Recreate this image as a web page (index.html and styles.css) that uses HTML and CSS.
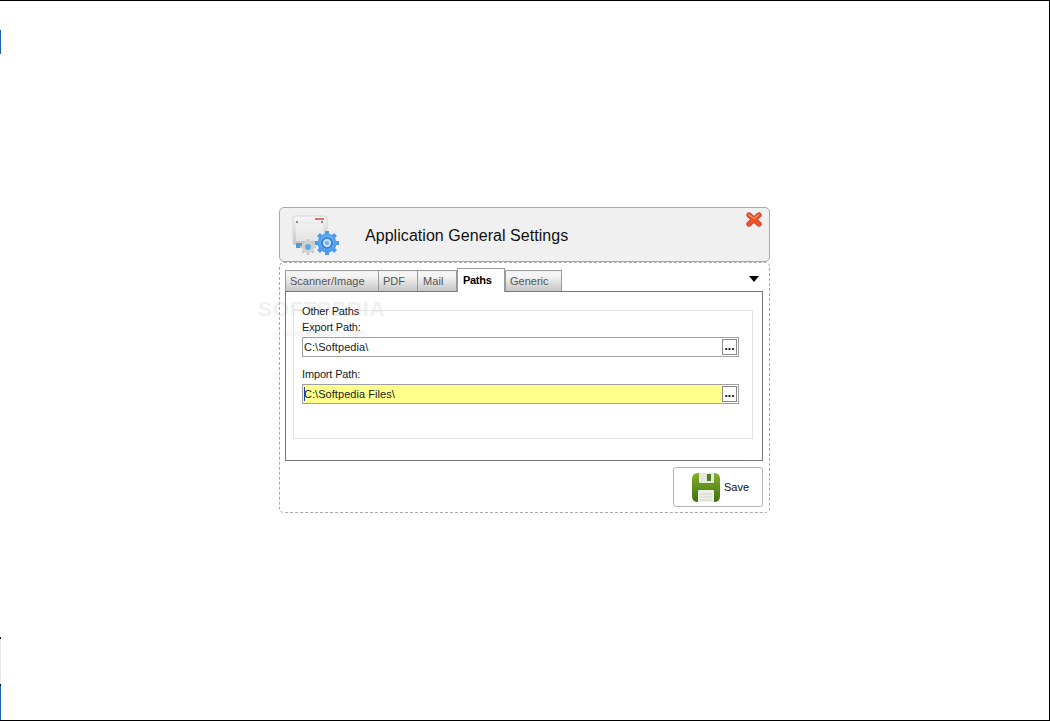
FILE: index.html
```html
<!DOCTYPE html>
<html lang="en">
<head>
<meta charset="utf-8">
<title>Application General Settings</title>
<link rel="stylesheet" href="styles.css">
</head>
<body>
<div class="screen">
  <span class="edge edge-blue-top"></span>
  <span class="edge edge-black-low"></span>
  <span class="edge edge-gray-low"></span>
  <span class="edge edge-blue-low"></span>

  <div class="dialog">
    <header class="head">
      <svg class="head-icon" width="50" height="44" viewBox="0 0 50 44" aria-hidden="true">
        <defs>
          <linearGradient id="win" x1="0" y1="0" x2="0" y2="1">
            <stop offset="0" stop-color="#f8f8f8"/><stop offset="1" stop-color="#c4c4c4"/>
          </linearGradient>
          <radialGradient id="blueg" cx="0.5" cy="0.45" r="0.6">
            <stop offset="0" stop-color="#8cc4f8"/><stop offset="1" stop-color="#3f92ea"/>
          </radialGradient>
          <filter id="soft" x="-5%" y="-5%" width="110%" height="110%">
            <feGaussianBlur stdDeviation="0.55"/>
          </filter>
        </defs>
        <g filter="url(#soft)">
          <rect x="1" y="3" width="34" height="29" rx="2" fill="url(#win)" stroke="#d8d8d8"/>
          <rect x="23" y="5" width="9" height="2" fill="#d9746c"/>
          <rect x="4" y="8" width="2" height="2" fill="#8a8a8a"/>
          <rect x="29" y="8" width="2" height="2" fill="#8a8a8a"/>
          <rect x="4" y="11" width="27" height="17" fill="#f8f8f8" opacity=".55"/>
          <rect x="4" y="30" width="6" height="5" fill="#4fa0c8"/>
          <g stroke="#c6c6c6" stroke-width="2.600">
            <path d="M16 26v16M8 34h16M10.500 28.500l11 11M21.500 28.500l-11 11"/>
          </g>
          <circle cx="16" cy="34" r="6" fill="#d2d2d2"/>
          <circle cx="16" cy="34" r="3" fill="#62aede"/>
          <g stroke="#4a9aec" stroke-width="4">
            <path d="M35 18v24M23 30h24M26.500 21.500l17 17M43.500 21.500l-17 17"/>
          </g>
          <circle cx="35" cy="30" r="9.500" fill="url(#blueg)"/>
          <circle cx="35" cy="30" r="5" fill="#bfdffa" stroke="#2a78d6" stroke-width="1.600"/>
          <circle cx="35" cy="30" r="2" fill="#6fb2ee"/>
        </g>
      </svg>
      <h1 class="head-title">Application General Settings</h1>
      <svg class="close" width="16" height="15" viewBox="0 0 16 15" aria-hidden="true">
        <path d="M3 3 13 12M13 3 3 12" fill="none" stroke="#c53a1e" stroke-width="5.200" stroke-linecap="round"/>
        <path d="M3 3 13 12M13 3 3 12" fill="none" stroke="#ee5228" stroke-width="3.800" stroke-linecap="round"/>
        <path d="M2.500 2.500 8 6.500 13 2.500" fill="none" stroke="#ffb090" stroke-width="1"/>
      </svg>
    </header>

    <section class="body">
      <div class="tabs-row">
        <div class="tabs">
          <span class="tab tab-scanner">Scanner/Image</span>
          <span class="tab tab-pdf">PDF</span>
          <span class="tab tab-mail">Mail</span>
          <span class="tab tab-active">Paths</span>
          <span class="tab tab-generic">Generic</span>
        </div>
        <span class="tabs-arrow"></span>
      </div>

      <div class="tab-panel">
        <fieldset class="group">
          <legend class="group-title">Other Paths</legend>
          <label class="field-label field-label-first">Export Path:</label>
          <div class="path-box">
            <span class="path-value">C:\Softpedia\</span>
            <span class="browse">...</span>
          </div>
          <label class="field-label field-label-second">Import Path:</label>
          <div class="path-box path-box-active">
            <span class="path-value"><i class="caret"></i>C:\Softpedia Files\</span>
            <span class="browse">...</span>
          </div>
        </fieldset>
      </div>

      <div class="foot">
        <button class="save" type="button">
          <svg width="28" height="29" viewBox="0 0 28 29" aria-hidden="true">
            <defs>
              <linearGradient id="disk" x1="0" y1="0" x2="0" y2="1">
                <stop offset="0" stop-color="#86b02a"/><stop offset="1" stop-color="#3c6f10"/>
              </linearGradient>
            </defs>
            <path d="M6 0H22Q28 0 28 6V23Q28 29 22 29H6Q0 29 0 23V6Q0 0 6 0Z" fill="url(#disk)"/>
            <path d="M7 0H22V9Q22 10 21 10H8Q7 10 7 9Z" fill="#e4e8d8"/>
            <rect x="15" y="1" width="4" height="7" fill="#4d7f1a"/>
            <path d="M6 18Q6 17 7 17H21Q22 17 22 18V29H6Z" fill="#eef0e8"/>
            <path d="M8 21H20M8 24H20M8 27H20" stroke="#d0d4c4"/>
          </svg>
          <span class="save-text">Save</span>
        </button>
      </div>
    </section>

    <div class="mark" aria-hidden="true">
      <span class="mark-name">SOFTPEDIA</span>
      <span class="mark-url">www.softpedia.com</span>
    </div>
  </div>
</div>
</body>
</html>
```

FILE: styles.css
```css
* { box-sizing: border-box; }

html { margin: 0; padding: 0; background: #fff; }

body {
  margin: 0;
  padding: 0;
  width: 1050px;
  height: 721px;
  overflow: hidden;
  font-family: "Liberation Sans", Arial, sans-serif;
  font-size: 11px;
  color: #1a1a1a;
}

.screen {
  position: relative;
  width: 1050px;
  height: 721px;
  padding: 206px 0 0 279px;
  border-top: 1px solid #000;
  border-right: 1px solid #000;
  border-bottom: 1px solid #000;
}

.edge { position: absolute; left: 0; width: 1px; }
.edge-blue-top { top: 29px; height: 24px; background: #1f5fb0; }
.edge-black-low { top: 636px; height: 2px; background: #111; }
.edge-gray-low { top: 638px; height: 45px; background: #e6e6e6; }
.edge-blue-low { top: 683px; height: 36px; background: #1f5fb0; border-top: 2px solid #111; }

.dialog { position: relative; width: 491px; }

.head {
  display: flex;
  align-items: center;
  height: 55px;
  border: 1px solid #a8a8a8;
  border-radius: 5px;
  background: #f0f0f0;
  position: relative;
}

.head-icon { margin: 1px 0 0 12px; flex: none; }

.head-title {
  margin: 2px 0 0 23px;
  font-size: 16px;
  letter-spacing: 0.050px;
  font-weight: 400;
  color: #111;
}

.close { position: absolute; top: 4px; right: 7px; }

.body {
  height: 251px;
  border: 1px dashed #a8a8a8;
  border-radius: 5px;
  padding: 5px 6px 0 5px;
}

.tabs-row { display: flex; align-items: flex-end; height: 23px; }

.tabs { display: flex; align-items: flex-end; flex: 1; height: 23px; }

.tab {
  display: block;
  height: 21px;
  padding: 4px 4px 0;
  border: 1px solid #9a9aa2;
  border-bottom: 0;
  background: linear-gradient(#f4f4f4 25%, #c6c6c6);
  color: #555;
  white-space: nowrap;
}

.tab-scanner { width: 94px; }
.tab-pdf { width: 40px; margin-left: -1px; }
.tab-mail { width: 40px; margin-left: -1px; padding-left: 5px; letter-spacing: 0.100px; }
.tab-generic { width: 57px; }

.tab-active {
  position: relative;
  width: 48px;
  height: 24px;
  margin-bottom: -1px;
  padding: 5px 5px 0;
  background: #fff;
  color: #000;
  font-weight: 700;
  letter-spacing: -0.300px;
  z-index: 1;
}

.tabs-arrow {
  width: 0;
  height: 0;
  margin: 0 4px 9px 0;
  border-left: 5px solid transparent;
  border-right: 5px solid transparent;
  border-top: 6px solid #000;
}

.tab-panel {
  height: 170px;
  border: 1px solid #77777f;
  padding: 12px 9px 0 7px;
}

.group {
  height: 135px;
  margin: 0;
  padding: 0 13px 0 8px;
  border: 1px solid #e2e2e2;
}

.group-title { height: 13px; padding: 0; line-height: 15px; color: #1a1a1a; letter-spacing: -0.150px; }

.field-label { display: block; line-height: 14px; color: #1a1a1a; letter-spacing: -0.150px; }
.field-label-first { margin-top: 3px; }
.field-label-second { margin-top: 10px; }

.path-box {
  display: flex;
  align-items: center;
  justify-content: space-between;
  height: 20px;
  margin-top: 3px;
  border: 1px solid #a0a0a0;
  background: #fff;
  padding: 0 1px;
}

.path-box-active { background: #ffff8c; }

.path-value { position: relative; line-height: 18px; letter-spacing: 0.050px; }

.caret {
  position: absolute;
  left: 0;
  top: 2px;
  height: 14px;
  width: 1px;
  background: #1a3fa8;
}

.browse {
  width: 15px;
  height: 16px;
  border: 1px solid #8a8a8a;
  background: #fff;
  box-shadow: 0 0 0 1px #fff;
  color: #000;
  font-weight: 700;
  font-size: 12px;
  line-height: 13px;
  letter-spacing: 0;
  text-align: center;
}

.foot { display: flex; justify-content: flex-end; margin-top: 6px; }

.save {
  display: flex;
  align-items: center;
  width: 90px;
  height: 40px;
  padding: 0 0 0 18px;
  border: 1px solid #b4b4b4;
  border-radius: 3px;
  background: #fff;
  font: inherit;
  color: #111;
}

.save-text { margin-left: 4px; }

.mark {
  position: absolute;
  left: -21px;
  top: 90px;
  z-index: -1;
  color: #efefef;
  pointer-events: none;
}

.mark-name {
  display: block;
  font-size: 21px;
  font-weight: 700;
  letter-spacing: 0.800px;
  line-height: 24px;
}

.mark-url {
  display: block;
  margin: 6px 0 0 25px;
  font-size: 9.500px;
  line-height: 12px;
}
```
